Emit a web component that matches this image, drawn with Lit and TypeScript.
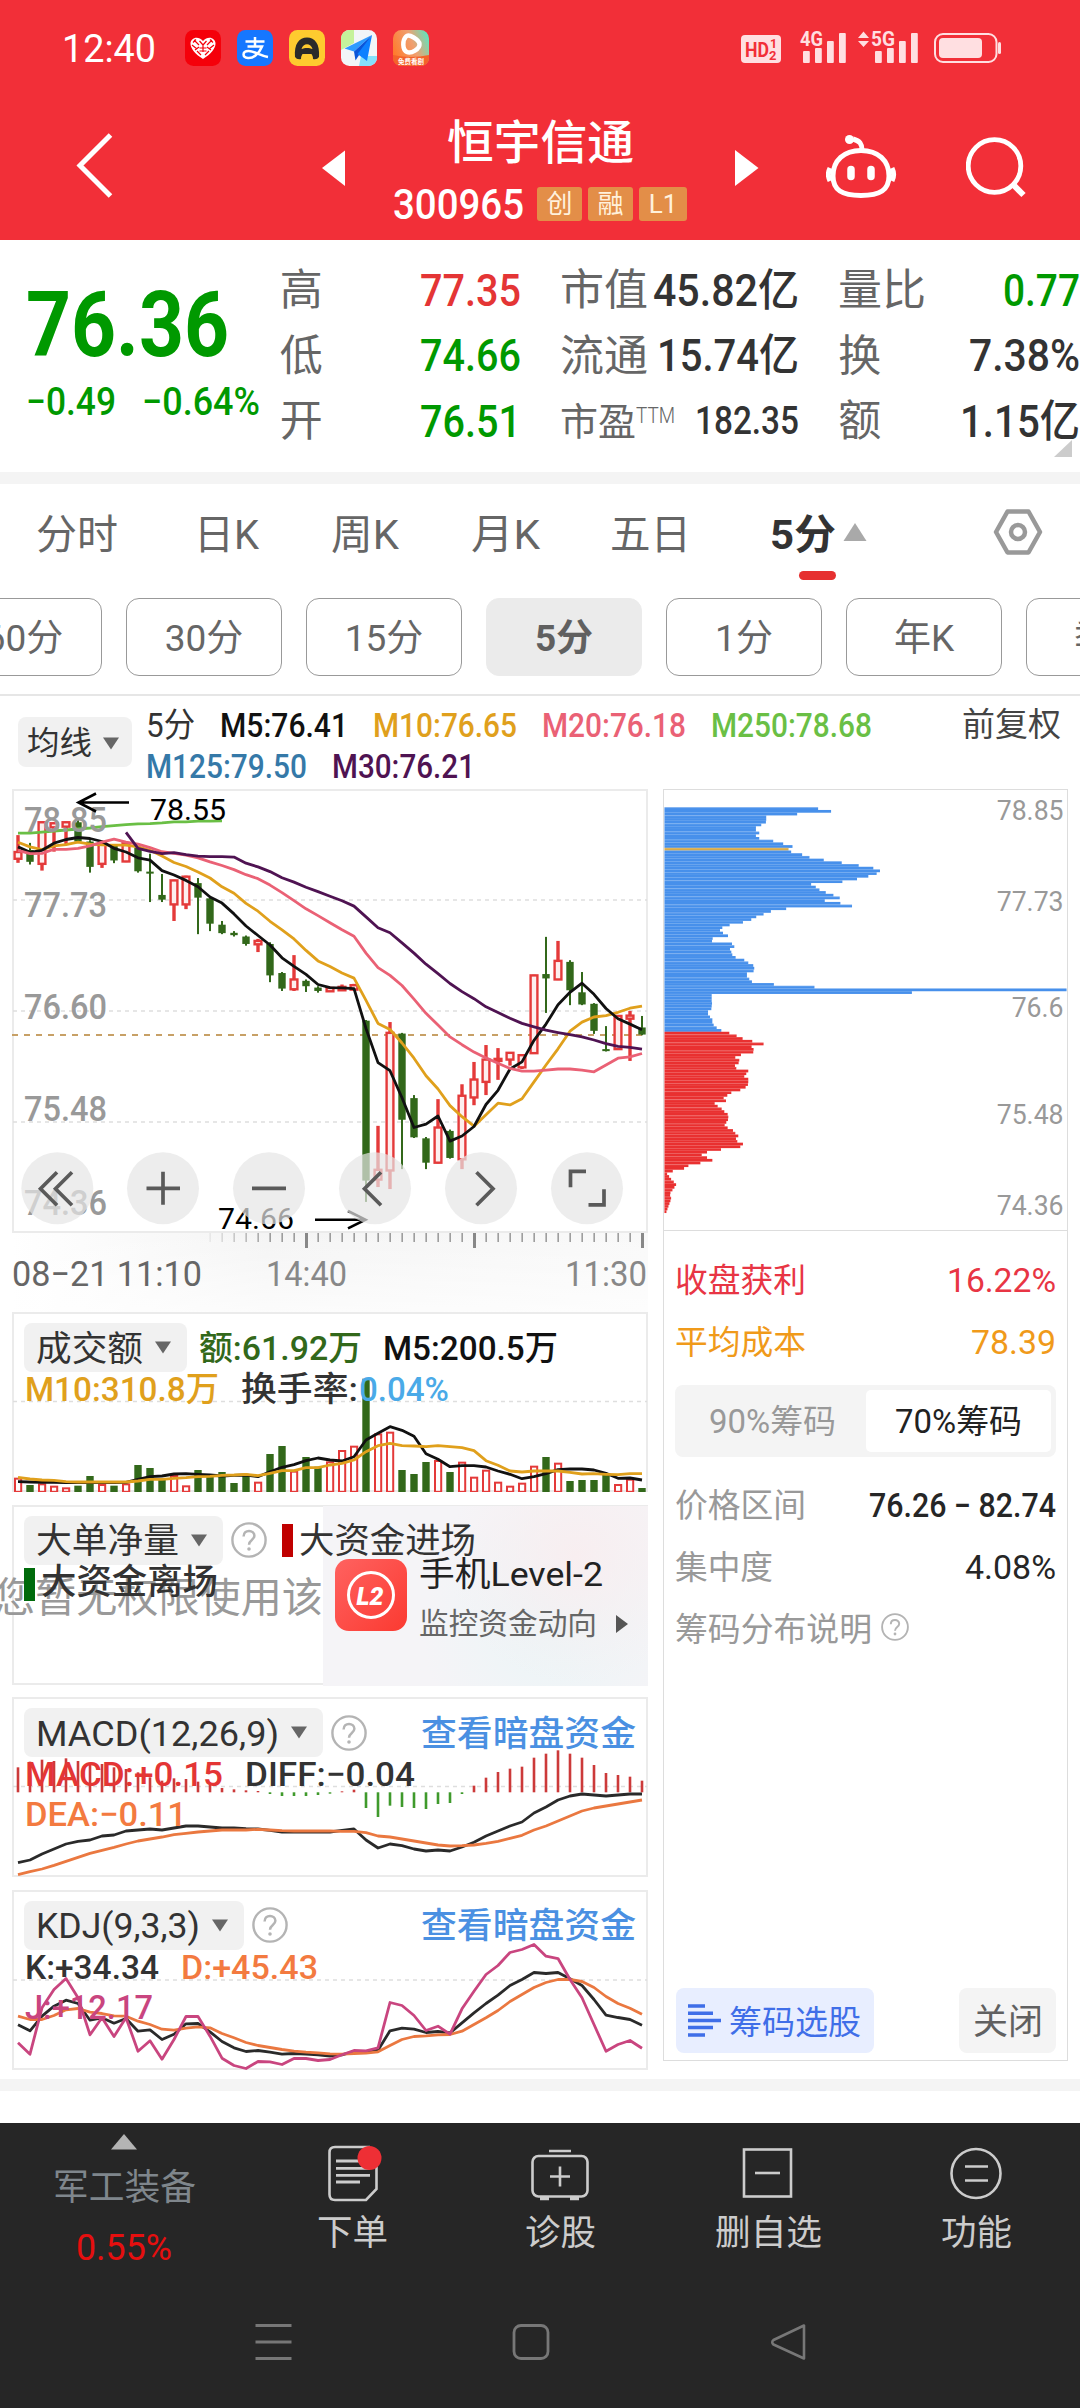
import { LitElement, html, svg, css } from "lit";

/** A single line of text condensed or stretched to a fixed advance width. */
class FitText extends LitElement {
  static properties = { text: { type: String }, w: { type: Number } };
  declare text: string;
  declare w: number;
  static styles = css`
    :host { display: inline-block; flex: none; line-height: 1; white-space: pre; }
    .run { display: block; width: max-content; transform-origin: 0 50%; }
  `;
  constructor() {
    super();
    this.text = "";
    this.w = 0;
  }
  render() {
    return html`<span class="run">${this.text}</span>`;
  }
  updated() {
    const run = this.renderRoot.querySelector(".run") as HTMLElement;
    const natural = run.getBoundingClientRect().width || 1;
    run.style.transform = `scaleX(${this.w / natural})`;
    this.style.width = `${this.w}px`;
  }
}
customElements.define("fit-text", FitText);

const ft = (text: string, w: number, cls = "") =>
  html`<fit-text class=${cls} .text=${text} .w=${w}></fit-text>`;

const st = (x0: number, x1: number, y: number, size: number, fill: string, text: string, weight = 400) =>
  svg`<text x=${x0} y=${y} font-size=${size} fill=${fill} font-weight=${weight} textLength=${x1 - x0} lengthAdjust="spacingAndGlyphs">${text}</text>`;

const RED = "#e43a3a";
const GREEN = "#32681a";
const STEP = 12;
const X0 = 18;
const xAt = (i: number) => X0 + STEP * i;

/** Vertical units per pixel of the price chart and of the indicator charts. */
const PRICE_UNITS = 2.958;
const UNITS = 3;

const line = (values: number[], origin: number, color: string, start = 0, units = UNITS) =>
  svg`<polyline fill="none" stroke=${color} stroke-width="2.8" stroke-linejoin="round"
    points=${values.map((v, k) => `${xAt(k + start)},${(origin + v / units).toFixed(1)}`).join(" ")} />`;

type Candle = [string, number, number, number, number];
const CANDLES: Candle[] = [
  ["r", 163, 213, 233, 245], ["g", 186, 207, 242, 250], ["r", 123, 125, 248, 268], ["r", 125, 128, 140, 212],
  ["r", 123, 125, 138, 190], ["g", 118, 125, 182, 185], ["g", 178, 182, 257, 274], ["r", 185, 187, 248, 260],
  ["g", 190, 195, 238, 246], ["r", 185, 187, 241, 243], ["g", 198, 200, 270, 274], ["g", 218, 271, 277, 361],
  ["g", 278, 340, 354, 361], ["r", 295, 297, 368, 417], ["r", 283, 286, 368, 382], ["g", 290, 305, 348, 456],
  ["g", 345, 350, 425, 447], ["g", 417, 428, 453, 456], ["g", 447, 452, 459, 463], ["g", 460, 463, 485, 490],
  ["r", 470, 476, 486, 509], ["g", 480, 485, 578, 598], ["g", 568, 571, 617, 624], ["r", 518, 590, 619, 624],
  ["g", 590, 594, 610, 627], ["g", 610, 614, 624, 629], ["r", 612, 615, 625, 627], ["r", 605, 612, 622, 624],
  ["r", 603, 607, 620, 622], ["g", 710, 712, 1185, 1248], ["r", 1023, 1153, 1182, 1204], ["r", 716, 748, 1155, 1210],
  ["g", 748, 750, 1005, 1151], ["g", 932, 941, 1057, 1059], ["g", 1056, 1060, 1132, 1151], ["r", 944, 1028, 1132, 1134],
  ["g", 1034, 1038, 1118, 1120], ["r", 900, 934, 1122, 1151], ["r", 834, 886, 939, 962], ["r", 784, 827, 893, 932],
  ["r", 793, 825, 831, 887], ["r", 805, 807, 827, 845], ["r", 812, 814, 850, 855], ["r", 576, 578, 808, 810],
  ["g", 464, 574, 587, 689], ["r", 476, 535, 590, 592], ["g", 533, 538, 622, 666], ["g", 568, 628, 664, 666],
  ["g", 660, 662, 742, 751], ["g", 728, 796, 802, 803], ["r", 696, 698, 796, 798], ["r", 683, 697, 706, 831],
  ["g", 698, 732, 753, 755],
];
const M5 = [198, 214, 208, 187, 176, 170, 173, 182, 202, 213, 230, 237, 268, 281, 297, 316, 346, 364, 396, 432, 460, 488, 526, 551, 575, 605, 614, 615, 617, 735, 836, 860, 940, 1028, 1018, 994, 1068, 1053, 1025, 960, 918, 855, 834, 770, 722, 665, 628, 601, 634, 676, 706, 722, 739];
const M10 = [184, 198, 206, 195, 191, 184, 190, 192, 193, 193, 198, 208, 225, 244, 256, 272, 290, 316, 335, 365, 388, 418, 443, 470, 504, 535, 552, 571, 586, 652, 720, 738, 778, 823, 875, 914, 963, 996, 1024, 990, 956, 961, 943, 893, 843, 795, 743, 716, 701, 697, 687, 675, 669];
const M20 = [208, 218, 217, 205, 205, 202, 195, 184, 175, 184, 190, 200, 212, 217, 222, 230, 242, 253, 265, 280, 292, 311, 333, 357, 381, 401, 422, 443, 462, 512, 555, 578, 608, 648, 690, 725, 760, 783, 805, 822, 838, 853, 861, 861, 858, 855, 855, 858, 863, 843, 823, 819, 809];
const M30 = [155, 202, 211, 218, 215, 221, 225, 227, 227, 228, 246, 257, 271, 289, 302, 317, 330, 344, 357, 373, 405, 437, 452, 482, 512, 545, 573, 602, 626, 647, 671, 688, 705, 720, 730, 740, 747, 753, 760, 769, 780, 788, 791, 796];
const M250 = [157, 157, 154, 151, 148, 145, 142, 138, 135, 132, 130, 129, 127, 124, 124, 122, 122, 121];

const VOLUME = "r533 g555 r550 r557 r562 g557 g528 r552 g557 r550 g495 g504 g535 r525 r556 g510 g528 g516 g549 g525 r545 g462 g438 r512 g471 g500 r484 r450 r437 g236 r400 r395 g510 g522 g486 r480 g516 r485 r530 r509 r545 r557 r548 r497 g471 r488 g543 g540 g540 g525 r552 r536 g564".split(" ");
const V5 = [545, 546, 547, 547, 548, 548, 548, 548, 548, 547, 538, 530, 528, 522, 521, 523, 525, 528, 526, 525, 530, 515, 502, 494, 482, 474, 480, 483, 470, 420, 400, 380, 391, 409, 461, 478, 500, 497, 497, 501, 513, 523, 536, 530, 521, 509, 507, 507, 510, 520, 535, 534, 540];
const V10 = [532, 537, 540, 541, 545, 546, 546, 546, 546, 546, 543, 538, 538, 535, 533, 530, 529, 526, 525, 523, 527, 520, 512, 512, 503, 503, 495, 490, 480, 455, 437, 430, 437, 438, 440, 437, 440, 443, 452, 482, 496, 513, 516, 513, 513, 513, 517, 522, 521, 523, 524, 521, 521];

const HIST = [235, 218, 212, 216, 208, 216, 228, 225, 235, 240, 250, 265, 275, 268, 270, 278, 288, 297, 301, 304, 306, 315, 321, 321, 321, 318, 314, 307, 302, 357, 384, 350, 354, 357, 360, 345, 342, 315, 290, 266, 249, 239, 233, 206, 194, 184, 194, 206, 228, 252, 258, 263, 275];
const DIFF = [521, 513, 495, 480, 465, 457, 453, 441, 438, 426, 423, 420, 423, 417, 411, 411, 414, 417, 417, 419, 420, 424, 429, 429, 429, 429, 429, 424, 420, 453, 477, 465, 470, 480, 486, 483, 486, 474, 460, 441, 426, 411, 399, 372, 354, 333, 321, 315, 318, 321, 318, 315, 315];
const DEA = [557, 548, 540, 529, 517, 505, 493, 484, 475, 465, 456, 450, 444, 437, 433, 429, 426, 423, 423, 423, 421, 423, 425, 426, 426, 426, 426, 427, 427, 431, 441, 444, 450, 456, 462, 468, 471, 470, 468, 463, 457, 448, 439, 423, 411, 396, 381, 366, 357, 351, 345, 339, 333];
const KK = [1006, 1024, 980, 950, 932, 942, 992, 985, 1001, 987, 1025, 1021, 1050, 1034, 1003, 1002, 1027, 1056, 1075, 1086, 1083, 1088, 1094, 1092, 1094, 1096, 1100, 1096, 1086, 1087, 1082, 1024, 1016, 1019, 1029, 1026, 1030, 1000, 970, 942, 917, 888, 870, 849, 852, 849, 868, 888, 930, 977, 984, 990, 1007];
const DD = [980, 990, 990, 978, 961, 957, 968, 972, 979, 980, 995, 1005, 1019, 1022, 1016, 1012, 1015, 1032, 1045, 1059, 1068, 1074, 1080, 1085, 1088, 1090, 1093, 1094, 1092, 1091, 1087, 1068, 1050, 1041, 1039, 1036, 1035, 1025, 1005, 985, 963, 936, 915, 894, 879, 870, 870, 876, 894, 921, 942, 956, 974];
const JJ = [1060, 1094, 955, 900, 867, 925, 1036, 985, 1041, 985, 1085, 1054, 1109, 1050, 981, 981, 1040, 1106, 1128, 1137, 1116, 1117, 1125, 1107, 1107, 1113, 1110, 1096, 1083, 1084, 1075, 939, 948, 978, 1023, 1010, 1034, 958, 905, 855, 828, 789, 780, 765, 800, 807, 870, 925, 1005, 1085, 1065, 1053, 1076];

const CHIPS = [504, 543, 441, 348, 348, 347, 333, 317, 317, 327, 317, 327, 369, 399, 427, 415, 423, 456, 478, 521, 575, 626, 670, 690, 680, 655, 621, 577, 483, 497, 508, 527, 550, 569, 524, 571, 606, 408, 362, 340, 318, 303, 278, 238, 216, 209, 218, 233, 187, 185, 245, 252, 239, 243, 246, 256, 282, 294, 309, 312, 310, 290, 290, 297, 305, 371, 493, 1251, 786, 184, 184, 184, 185, 184, 183, 173, 173, 179, 186, 186, 190, 199, 213, 237, 259, 277, 306, 340, 304, 310, 309, 272, 255, 267, 265, 254, 258, 294, 288, 282, 294, 294, 293, 286, 270, 243, 231, 220, 227, 193, 202, 214, 222, 232, 234, 233, 228, 223, 232, 248, 255, 264, 257, 261, 278, 270, 212, 170, 154, 170, 186, 150, 114, 101, 67, 50, 56, 62, 70, 77, 72, 66, 60, 59, 62, 60, 57, 54, 51, 48];

const candle = ([kind, hi, top, bottom, lo]: Candle, i: number) => {
  const x = xAt(i);
  const y = (v: number) => 780 + v / PRICE_UNITS;
  const h = (v: number, min = 0) => Math.max(min, v / PRICE_UNITS);
  if (kind === "g") {
    return svg`<rect x=${x - 1} y=${y(hi)} width="2" height=${h(lo - hi)} fill=${GREEN} />
      <rect x=${x - 3.7} y=${y(top)} width="7.4" height=${h(bottom - top, 1.6)} fill=${GREEN} />`;
  }
  return svg`<rect x=${x - 1.7} y=${y(hi)} width="3.4" height=${h(top - hi)} fill=${RED} />
    <rect x=${x - 1.7} y=${y(bottom)} width="3.4" height=${h(lo - bottom)} fill=${RED} />
    <rect x=${x - 3.4} y=${y(top)} width="6.8" height=${h(bottom - top, 1)} fill="#fdeeee" stroke=${RED} stroke-width="2.4" />`;
};

const dash = (y: number) =>
  svg`<line x1="13" x2="647" y1=${y} y2=${y} stroke="#dedede" stroke-width="1.4" stroke-dasharray="4 4" />`;
const frame = (y: number, h: number) =>
  svg`<rect x="13" y=${y + 1} width="634" height=${h - 2} fill="none" stroke="#ebebeb" stroke-width="2" />`;

const caret = html`<svg class="caret" viewBox="0 0 18 13"><path d="M1 .5h16L9 12.5z" fill="#666" /></svg>`;
const help = (cls: string) => html`<svg class=${cls} viewBox="0 0 36 36">
  <circle cx="18" cy="18" r="16.6" fill="none" stroke="#b4b4b4" stroke-width="2.4" />
  <path d="M12.6 14.4c0-7.4 10.8-7 10.8-.6 0 4.2-5.4 4.2-5.4 8.9" fill="none" stroke="#b4b4b4" stroke-width="2.5" />
  <circle cx="18" cy="27" r="1.8" fill="#b4b4b4" /></svg>`;

class AppRoot extends LitElement {
  static styles = css`
    :host {
      display: block; width: 1080px; height: 2408px; overflow: hidden; background: #fff; color: #333;
      font-family: Roboto, "Noto Sans CJK SC", sans-serif; line-height: 1;
    }
    * { box-sizing: border-box; }
    svg { display: block; flex: none; }
    svg text { font-family: Roboto, "Noto Sans CJK SC", sans-serif; }
    .row { display: flex; align-items: center; }

    .top { background: #f22f38; color: #fff; height: 240px; }
    .status { height: 96px; padding-left: 62px; }
    .clock { font-size: 38px; margin: 2px 29px 0 0; }
    .apps { gap: 16px; }
    .app { width: 36px; height: 36px; }
    .signals { margin-left: 306px; width: 270px; height: 96px; }
    .bar { display: grid; grid-template-columns: 245px 23px 390px 91px 140px 1fr; padding-left: 77px; height: 144px; }
    .bar svg { height: 144px; }
    .bar .back { margin-left: -10px; }
    .name { display: flex; flex-direction: column; align-items: center; padding-top: 24px; }
    .name .title { font-size: 46.5px; font-weight: 500; height: 50px; }
    .code { margin-top: 14px; height: 40px; gap: 6px; }
    .code .num { font-size: 42px; font-weight: 500; margin: 2px 7px 0 0; }
    .badge { width: 45px; height: 34px; border-radius: 3px; background: #e38e48; color: #fff1dc; font-size: 26px; display: flex; align-items: center; justify-content: center; padding-bottom: 1px; }
    .badge.wide { width: 48px; }

    .quote { display: flex; height: 232px; padding-top: 18px; position: relative; }
    .price { width: 280px; padding-left: 26px; display: flex; flex-direction: column; color: #090; }
    .price .last { font-size: 91px; font-weight: 700; height: 106px; padding-top: 22px; }
    .price .chg { height: 76px; gap: 26px; font-size: 39px; font-weight: 500; }
    .facts { display: flex; flex-direction: column; margin-right: 39px; }
    .facts.a { width: 242px; } .facts.b { width: 239px; } .facts.c { width: 242px; margin-right: 0; }
    .fact { height: 65.5px; display: flex; align-items: center; justify-content: space-between; font-size: 43px; color: #666; }
    .v { font-size: 44px; font-weight: 500; color: #333; }
    .v.sm { font-size: 39px; } .v.up { color: #e43535; } .v.dn { color: #090; }
    .pe { display: flex; align-items: flex-start; font-size: 38px; }
    .pe .ttm { font-size: 22px; font-weight: 300; margin-top: 2px; }
    .corner { position: absolute; left: 1054px; top: 200px; width: 18px; height: 17px; }
    .band { height: 12px; background: #f4f4f4; }

    .tabs { display: grid; grid-template-columns: 158px 137px 140px 139px 160px 73px 151px 1fr; padding: 0 0 12px 36px; height: 114px; align-items: center; font-size: 40.5px; color: #666; position: relative; }
    .tabs svg { height: 98px; align-self: start; }
    .tabs .gear { margin-left: -2px; }
    .on { font-weight: 700; color: #333; }
    .mark { position: absolute; left: 799px; top: 87px; width: 37px; height: 9px; border-radius: 5px; background: #e63030; }
    .periods { display: flex; gap: 24px; margin-left: -54px; width: 1300px; height: 97px; }
    .period { width: 156px; height: 78px; flex: none; border: 1.5px solid #999; border-radius: 13px; display: flex; align-items: center; justify-content: center; font-size: 37px; color: #666; padding-top: 3px; }
    .period.sel { background: #ebebeb; border-color: #ebebeb; font-weight: 700; color: #606060; }
    .clip { overflow: hidden; border-bottom: 2px solid #e6e6e6; height: 98px; }

    .legend { display: flex; height: 93px; padding: 0 19px 0 18px; }
    .chip { display: flex; align-items: center; background: #f1f1f1; border-radius: 8px; height: 49px; font-size: 35px; padding: 0 15px 0 12px; gap: 11px; color: #333; }
    .head .chip fit-text { margin-top: 3px; }
    .chip.ma { width: 114px; height: 50px; margin: 21px 14px 0 0; font-size: 32px; padding: 2px 0 0 9px; gap: 10px; }
    .caret { width: 18px; height: 13px; }
    .lines { padding-top: 8px; flex: 1; }
    .lrow { display: flex; align-items: center; height: 41px; gap: 25px; font-size: 34px; font-weight: 500; }
    .adj { font-size: 33px; margin-top: 12px; color: #444; }
    .n { font-weight: 400; }
    .k { color: #111; } .o { color: #e0a01c; } .p { color: #ea6175; } .g { color: #6abf45; } .b { color: #3579a8; } .u { color: #4f1352; }

    .body { display: flex; height: 1290px; padding-left: 12px; gap: 15px; align-items: flex-start; }
    .charts { width: 636px; display: flex; flex-direction: column; }
    .main { width: 636px; height: 523px; }
    .panel { position: relative; height: 180px; width: 636px; margin-bottom: 12.5px; padding: 11px 0 0 12px; }
    .panel .plot { position: absolute; left: 0; top: 0; width: 636px; height: 180px; }
    .head, .sub { position: relative; display: flex; align-items: center; }
    .head { height: 49px; }
    .sub { height: 40px; font-size: 34px; font-weight: 500; padding-left: 1px; gap: 22px; }
    .head + .sub { margin-top: -3px; }
    .lbl { font-size: 34px; font-weight: 500; }
    .help { width: 36px; height: 36px; margin-left: 8px; }
    .link { color: #4a90e2; font-size: 35px; font-weight: 500; margin: 3px 12px 0 auto; }
    .vg { color: #32681a; margin-left: 12px; } .vk { color: #111; margin-left: 21px; }
    .mr { color: #e43535; } .md { color: #333; } .mo { color: #f37a40; } .mj { color: #c9457f; } .sky { color: #4aaae8; margin-left: -21px; }
    .flag { width: 11px; height: 33px; flex: none; margin-right: 6px; }
    .flag.in { background: #c00000; margin-left: 15px; } .flag.out { background: #006b0b; margin-top: 3px; }
    .fund { font-size: 35px; color: #333; }
    .head .fund { margin-top: 3px; }
    .head + .sub.net { gap: 0; padding-left: 0; margin-top: -2px; }
    .noauth { position: absolute; left: -18px; top: 73px; font-size: 41px; color: #999; }
    .promo { position: absolute; left: 311px; top: 1px; width: 325px; height: 180px; display: flex; padding: 53px 0 0 12px; background: radial-gradient(circle at 78% 28%, #f8eef0 0, rgba(248,238,240,0) 45%), radial-gradient(circle at 70% 68%, #ebf5f7 0, rgba(235,245,247,0) 50%), #f5f4f7; }
    .promo .logo { width: 72px; height: 72px; margin-right: 12px; }
    .ptext { display: flex; flex-direction: column; margin-top: -2px; color: #222; font-size: 34px; gap: 18px; }
    .ptext .psub { color: #666; font-size: 30px; gap: 18px; }

    .side { width: 405px; height: 1272px; border: 1.5px solid #ddd; display: flex; flex-direction: column; }
    .side .dist { width: 403px; height: 441px; border-bottom: 1.5px solid #ddd; margin-bottom: 18px; }
    .kv { display: flex; align-items: center; justify-content: space-between; height: 62px; padding: 0 11px 0 11px; font-size: 33px; color: #999; }
    .kv.red { color: #e83544; } .kv.amber { color: #f09a1a; }
    .kv .dark { color: #262626; } .kv .mid { font-weight: 500; }
    .kv.left { justify-content: flex-start; gap: 9px; }
    .kv .help { width: 28px; height: 28px; margin: -4px 0 0; }
    .seg { display: flex; height: 72px; margin: 12px 11px 17px; padding: 5px; background: #f4f4f4; border-radius: 8px; font-size: 33px; color: #999; }
    .seg div { flex: 1; display: flex; align-items: center; justify-content: center; border-radius: 5px; padding-top: 1px; }
    .seg .cur { background: #fff; color: #222; }
    .foot { margin: auto 11px 7px 12px; display: flex; justify-content: space-between; height: 65px; font-size: 33px; }
    .foot fit-text { margin-top: 3px; }
    .pick { width: 198px; border-radius: 8px; background: #e8eeff; color: #3f6ee8; display: flex; align-items: center; padding-left: 12px; gap: 8px; }
    .close { width: 97px; border-radius: 8px; background: #f4f4f4; color: #606060; display: flex; align-items: center; justify-content: center; font-size: 35px; }

    .gap { height: 32px; }
    .dock { height: 285px; background: #262626; color: #ccc; }
    .items { display: grid; grid-template-columns: 248px repeat(4, 208px); height: 157px; }
    .item { display: flex; flex-direction: column; align-items: center; font-size: 35.5px; }
    .item .ico { width: 80px; height: 80px; }
    .item .t { height: 58px; padding-top: 13px; }
    .sector { display: flex; flex-direction: column; align-items: center; color: #7f868c; font-size: 36px; }
    .sector .up { width: 80px; height: 37px; }
    .sector .t { height: 54px; padding-top: 10px; }
    .sector .pct { height: 66px; padding-top: 16px; color: #e60f0f; }
    .nav { display: grid; grid-template-columns: repeat(3, 257px); padding-left: 145px; }
    .nav svg { width: 257px; height: 128px; }
  `;

  top() {
    return html`<div class="top">
      <div class="status row">
        ${ft("12:40", 94, "clock")}
        <div class="apps row">
          <svg class="app" viewBox="0 0 36 36"><rect width="36" height="36" rx="8.5" fill="#f5000a" />
            <path d="M18 29C10 24 5.5 18.5 5.5 13.500S12.500 5 18 11c5.500-6 12.500-2.500 12.500 2.500S26 24 18 29z" fill="#fff" />
            <path d="M9 10l5 5m-7 0l5 4M27 10l-5 5m7 0l-5 4M14.500 11l3.500 4 3.500-4M18 15v7m-3.500-4h7m-7 3h7M12 21l4 4m8-4l-4 4M8 12.500l3-3M28 12.500l-3-3M10 20l4-3M26 20l-4-3" stroke="#f5000a" stroke-width="1.2" fill="none" /></svg>
          <svg class="app" viewBox="0 0 36 36"><rect width="36" height="36" rx="8.5" fill="#1677ff" />
            <path d="M8.500 11.500h19M18 7v9M10.500 16.500h14.500C22 24 16 28.500 11 28 5 27.500 5 21 11.500 21c6 0 11 4.500 19.500 6" stroke="#fff" stroke-width="2.5" fill="none" /></svg>
          <svg class="app" viewBox="0 0 36 36"><rect width="36" height="36" rx="8.5" fill="#fecb2f" />
            <path d="M6 27C5 14 10 7.500 18 7.500S31 14 30 27q-2 3-6 2c0-2-.500-3.500-1.500-5h-9c-1 1.500-1.500 3-1.500 5q-4 1-6-2z" fill="#2a2a2a" />
            <path d="M12.500 19c1.500-6.500 9.500-6.500 11 0-3-1.500-8-1.500-11 0z" fill="#fecb2f" /></svg>
          <svg class="app" viewBox="0 0 36 36"><rect width="36" height="36" rx="8.5" fill="#f2f5f8" />
            <path d="M8.500 0H13v13L0 20V8.500C0 4 4 0 8.500 0z" fill="#c5f29b" /><path d="M20 26h16v1.500c0 4.500-4 8.500-8.500 8.500H18z" fill="#86e0fb" />
            <path d="M31 5L3.500 18.500l9.500 3z" fill="#2e9bff" /><path d="M31 5L13 21.500l1.500 9z" fill="#0b55d8" /><path d="M31 5L16.500 24 26 31z" fill="#0d80ff" /></svg>
          <svg class="app" viewBox="0 0 36 36"><defs><linearGradient id="vg" x1="0" y1=".6" x2="1" y2=".2"><stop offset="0" stop-color="#ff7a2c" /><stop offset=".55" stop-color="#f0a070" /><stop offset="1" stop-color="#63e3bd" /></linearGradient></defs>
            <rect width="36" height="36" rx="8.5" fill="url(#vg)" /><path d="M0 25q18 4 36 0v3c0 4-3 8-8 8H8c-5 0-8-4-8-8z" fill="#f4622a" />
            <path d="M13 6.500c3-3 13 3 13.500 7.500.5 5-8.500 10-12.500 8-5-2.500-4.500-12-1-15.500z" fill="none" stroke="#fff" stroke-width="4.5" />
            <text x="5" y="33.5" font-size="6.5" font-weight="700" fill="#fff" textLength="26">免费看剧</text></svg>
        </div>
        <svg class="signals" viewBox="735 0 270 96" fill="#ffdfe1">
          <rect x="741" y="35" width="40" height="28" rx="4" />
          <text x="745" y="57" font-size="21" font-weight="700" fill="#f22f38" textLength="24" lengthAdjust="spacingAndGlyphs">HD</text>
          <text x="770" y="48" font-size="12.5" font-weight="700" fill="#f22f38">1</text><text x="769" y="60" font-size="13" font-weight="700" fill="#f22f38">2</text>
          ${st(800, 823, 46, 21, "#ffdfe1", "4G", 700)}${st(871, 895, 46, 21, "#ffdfe1", "5G", 700)}
          ${[803, 875].map((x) => [51, 48, 41, 33].map((y, k) => svg`<rect x=${x + 12 * k} y=${y} width="6.8" height=${63 - y} rx="1" />`))}
          <path d="M858 38l5.500-6.500L869 38zM858 41l5.500 6 5.500-6z" />
          <rect x="935" y="34" width="61.5" height="28" rx="8" fill="none" stroke="#ffdfe1" stroke-width="2" />
          <rect x="939" y="38" width="43" height="20" rx="4" /><rect x="998" y="42" width="3" height="12" rx="1.5" />
        </svg>
      </div>
      <div class="bar">
        <svg class="back" width="60" viewBox="67 96 60 144"><path d="M110.500 135L80 165.500 110.500 196" fill="none" stroke="#fff" stroke-width="5" /></svg>
        <svg width="23" viewBox="322 96 23 144"><path d="M345 150.500v35.500L322 168z" fill="#fff" /></svg>
        <div class="name">
          ${ft("恒宇信通", 187, "title")}
          <div class="code row">${ft("300965", 131, "num")}
            <span class="badge">创</span><span class="badge">融</span><span class="badge wide">L1</span></div>
        </div>
        <svg width="24" viewBox="735 96 24 144"><path d="M735 150v36l23.500-18z" fill="#fff" /></svg>
        <svg width="80" viewBox="826 96 80 144"><g transform="translate(-4 0)" fill="none" stroke="#fff" stroke-width="5">
          <path d="M865 150.500c-17 0-28 10-28 25.500 0 14 9 19.500 28 19.500s28-5.500 28-19.500C893 160.500 882 150.500 865 150.500z" />
          <path d="M866 150c0-6-2-9-9-11" /><circle cx="853.5" cy="139.5" r="4.5" fill="#fff" stroke="none" />
          <path d="M834 168c-2 4-2 9 0 13M896 168c2 4 2 9 0 13" stroke-width="5" />
          <path d="M855 169.500v7M875 169.500v7" stroke-width="7.5" stroke-linecap="round" /></g></svg>
        <svg width="62" viewBox="966 96 62 144"><g fill="none" stroke="#fff" stroke-width="4.8"><circle cx="994.5" cy="166" r="26.3" /><path d="M1013 184.500l10.500 10.500" stroke-width="6" /></g></svg>
      </div>
    </div>`;
  }

  quote() {
    return html`<div class="quote">
      <div class="price">${ft("76.36", 203, "last")}<div class="chg row">${ft("−0.49", 90)}${ft("−0.64%", 118)}</div></div>
      <div class="facts a">
        <div class="fact">${ft("高", 43)}${ft("77.35", 101, "v up")}</div>
        <div class="fact">${ft("低", 43)}${ft("74.66", 101, "v dn")}</div>
        <div class="fact">${ft("开", 43)}${ft("76.51", 101, "v dn")}</div>
      </div>
      <div class="facts b">
        <div class="fact">${ft("市值", 88)}${ft("45.82亿", 146, "v")}</div>
        <div class="fact">${ft("流通", 88)}${ft("15.74亿", 142, "v")}</div>
        <div class="fact"><span class="pe">${ft("市盈", 76)}${ft("TTM", 39, "ttm")}</span>${ft("182.35", 104, "v sm")}</div>
      </div>
      <div class="facts c">
        <div class="fact">${ft("量比", 88)}${ft("0.77", 77, "v dn")}</div>
        <div class="fact">${ft("换", 43)}${ft("7.38%", 111, "v")}</div>
        <div class="fact">${ft("额", 43)}${ft("1.15亿", 120, "v")}</div>
      </div>
      <svg class="corner" viewBox="0 0 18 17"><path d="M18 0v17H0z" fill="#ccc" /></svg>
    </div>
    <div class="band"></div>`;
  }

  tabs() {
    return html`<div class="tabs">
      ${ft("分时", 82)}${ft("日K", 65)}${ft("周K", 68)}${ft("月K", 69)}${ft("五日", 81)}${ft("5分", 66, "on")}
      <svg width="24" viewBox="845 484 24 98"><path d="M857 523l11.500 18h-23z" fill="#a9a9a9" /></svg>
      <svg class="gear" width="52" viewBox="994 484 52 98"><g fill="none" stroke="#999" stroke-width="4.5" stroke-linejoin="round"><path d="M1009.500 511.500h21L1042 532l-11.500 20.500h-21L998 532z" /><circle cx="1020" cy="532" r="7" /></g></svg>
      <div class="mark"></div>
    </div>
    <div class="clip"><div class="periods">
      ${["60分", "30分", "15分", "5分", "1分", "年K", "季K"].map(
        (p) => html`<div class="period ${p === "5分" ? "sel" : ""}">${p}</div>`)}
    </div></div>
    <div class="legend">
      <div class="chip ma">${ft("均线", 65)}${caret}</div>
      <div class="lines">
        <div class="lrow">${ft("5分", 49, "n")}${ft("M5:76.41", 128, "k")}${ft("M10:76.65", 144, "o")}${ft("M20:76.18", 144, "p")}${ft("M250:78.68", 161, "g")}</div>
        <div class="lrow">${ft("M125:79.50", 161, "b")}${ft("M30:76.21", 143, "u")}</div>
      </div>
      ${ft("前复权", 99, "adj")}
    </div>`;
  }

  mainChart() {
    const grey = "#999";
    const ticks = Array.from({ length: 37 }, (_, k) => 16 + k);
    const price = (v: number[], color: string, start = 0) => line(v, 780, color, start, PRICE_UNITS);
    return html`<svg class="main" viewBox="12 789 636 523">
      <defs><linearGradient id="ax" x1="0" x2="1" y1="0" y2="0"><stop offset="0" stop-color="#fff" /><stop offset=".4" stop-color="#f4f4f4" /><stop offset="1" stop-color="#f9f9f9" /></linearGradient>
      <linearGradient id="fade" x1="0" x2="0" y1="0" y2="1"><stop offset="0" stop-color="#fff" stop-opacity="0" /><stop offset="1" stop-color="#fff" stop-opacity=".7" /></linearGradient></defs>
      <rect x="12" y="1232" width="636" height="80" fill="url(#ax)" /><rect x="12" y="1232" width="636" height="80" fill="url(#fade)" />
      ${frame(789, 444)}${[900, 1011, 1122].map(dash)}
      <line x1="12" x2="648" y1="1035" y2="1035" stroke="#c7a066" stroke-width="1.8" stroke-dasharray="6 6" />
      ${CANDLES.map(candle)}
      ${price(M250, "#6abf45")}${price(M10, "#e0a01c")}${price(M5, "#111")}${price(M20, "#ea6175")}${price(M30, "#4f1352", 9)}
      ${st(24, 107, 832, 35, grey, "78.85", 500)}${st(24, 107, 917, 35, grey, "77.73", 500)}${st(24, 107, 1019, 35, grey, "76.60", 500)}
      ${st(24, 107, 1121, 35, grey, "75.48", 500)}${st(24, 107, 1215, 35, grey, "74.36", 500)}
      ${st(150, 226, 820, 29.5, "#000", "78.55")}${st(218, 294, 1229, 29.5, "#000", "74.66")}
      <path d="M129 802.500H79M96 793.500l-17.500 9 17.500 9M315 1219.700h49M348 1211l17.500 8.700-17.500 8.700" fill="none" stroke="#000" stroke-width="2.6" />
      ${[57.3, 163, 269, 375, 481, 587].map((x) => svg`<circle cx=${x} cy="1188.3" r="36" fill="#e5e5e5" fill-opacity=".7" />`)}
      <path transform="translate(0 5.8)" d="M57 1166.500l-16.500 16.500L57 1199.500M72 1166.500l-16.500 16.500 16.500 16.500M146.500 1182.500H180M163 1166v33M252 1182.500h34M381 1166.500l-16.500 16.500 16.500 16.500M476.500 1166.500l16.500 16.500-16.500 16.500M570.500 1181.500v-16h15.500M604 1183.500V1199h-15.500" fill="none" stroke="#5a5a5a" stroke-width="3.7" />
      ${ticks.map((i) => {
        const major = i === 24 || i === 38 || i === 52;
        return svg`<rect x=${xAt(i) - (major ? 1 : 0.5)} y="1233" width=${major ? 3 : 1.3} height=${major ? 15 : 9} fill="#888" opacity=${Math.min(1, (i - 15) / 6)} />`;
      })}
      ${st(12, 202, 1286, 35, "#666", "08−21 11:10", 400)}${st(266, 347, 1286, 35, "#888", "14:40", 400)}${st(565, 647, 1286, 35, "#888", "11:30", 400)}
    </svg>`;
  }

  volume() {
    return html`<div class="panel">
      <svg class="plot" viewBox="12 1312 636 180">${frame(1312, 180)}${dash(1401.5)}
        ${VOLUME.map((v, i) => {
          const y = 1300 + Number(v.slice(1)) / 3;
          return v[0] === "g"
            ? svg`<rect x=${xAt(i) - 3.7} y=${y} width="7.4" height=${1492 - y} fill=${GREEN} />`
            : svg`<rect x=${xAt(i) - 3} y=${y + 1} width="6.2" height=${1490.8 - y} fill="#fff" stroke=${RED} stroke-width="2" />`;
        })}
        ${line(V5, 1300, "#111")}${line(V10, 1300, "#e0a01c")}
      </svg>
      <div class="head"><div class="chip">${ft("成交额", 107)}${caret}</div>${ft("额:61.92万", 163, "lbl vg")}${ft("M5:200.5万", 175, "lbl vk")}</div>
      <div class="sub">${ft("M10:310.8万", 194, "o")}${ft("换手率:", 117, "md")}${ft("0.04%", 90, "sky")}</div>
    </div>`;
  }

  netOrders() {
    return html`<div class="panel">
      <svg class="plot" viewBox="12 1505 636 180">${frame(1505, 180)}</svg>
      ${ft("您暂无权限使用该", 329, "noauth")}
      <div class="promo">
        <svg class="logo" viewBox="0 0 72 72"><defs><linearGradient id="lg" x1="0" x2="1" y1="0" y2="1"><stop offset="0" stop-color="#ff6260" /><stop offset="1" stop-color="#fb3a31" /></linearGradient></defs>
          <rect width="72" height="72" rx="14" fill="url(#lg)" /><circle cx="36" cy="36" r="22.5" fill="none" stroke="#fff" stroke-width="3" />
          <text x="21.5" y="45.5" font-size="26" font-weight="900" font-style="italic" fill="#fff" textLength="27" lengthAdjust="spacingAndGlyphs">L2</text></svg>
        <div class="ptext">${ft("手机Level-2", 184)}
          <div class="psub row">${ft("监控资金动向", 178)}<svg width="13" height="18" viewBox="0 0 13 18"><path d="M1 0l12 9L1 18z" fill="#555" /></svg></div></div>
      </div>
      <div class="head"><div class="chip">${ft("大单净量", 143)}${caret}</div>${help("help")}<i class="flag in"></i>${ft("大资金进场", 177, "fund")}</div>
      <div class="sub net"><i class="flag out"></i>${ft("大资金离场", 177, "fund")}</div>
    </div>`;
  }

  macd() {
    return html`<div class="panel">
      <svg class="plot" viewBox="12 1698 636 180">${frame(1698, 180)}${dash(1787.5)}
        ${HIST.map((v, i) => {
          const y = 1690 + v / 3;
          const z = 1793.3;
          return svg`<rect x=${xAt(i) - 1.3} y=${Math.min(y, z)} width="2.6" height=${Math.abs(z - y)} fill=${v < 310 ? "#cc3a3a" : "#3f9a2c"} />`;
        })}
        ${line(DIFF, 1690, "#2a2a2a")}${line(DEA, 1690, "#ea7840")}
      </svg>
      <div class="head"><div class="chip">${ft("MACD(12,26,9)", 243)}${caret}</div>${help("help")}${ft("查看暗盘资金", 215, "link")}</div>
      <div class="sub">${ft("MACD:+0.15", 198, "mr")}${ft("DIFF:−0.04", 170, "md")}</div>
      <div class="sub">${ft("DEA:−0.11", 162, "mo")}</div>
    </div>`;
  }

  kdj() {
    return html`<div class="panel">
      <svg class="plot" viewBox="12 1890.5 636 180">${frame(1890.5, 180)}${dash(1980.5)}
        ${line(KK, 1690, "#2a2a2a")}${line(DD, 1690, "#ea7840")}${line(JJ, 1690, "#c9457f")}
      </svg>
      <div class="head"><div class="chip">${ft("KDJ(9,3,3)", 164)}${caret}</div>${help("help")}${ft("查看暗盘资金", 215, "link")}</div>
      <div class="sub">${ft("K:+34.34", 134, "md")}${ft("D:+45.43", 137, "mo")}</div>
      <div class="sub">${ft("J:+12.17", 128, "mj")}</div>
    </div>`;
  }

  side() {
    const h = 2.711;
    const grey = "#999";
    return html`<div class="side">
      <svg class="dist" viewBox="664 790 403 441">
        ${CHIPS.map((c, i) => svg`<rect x="664" y=${807.3 + i * h} width=${(c - 42) / 3} height=${h + 0.05} fill=${i === 15 ? "#d8ab4a" : i < 83 ? "#4790eb" : "#e93030"} />
          ${i % 3 === 0 ? svg`<rect x="664" y=${807.3 + i * h} width=${(c - 42) / 3} height=".9" fill="#fff" opacity=".16" />` : ""}`)}
        ${st(997, 1064, 820, 27, grey, "78.85")}${st(997, 1064, 911, 27, grey, "77.73")}${st(1012, 1064, 1018, 27, grey, "76.6")}${st(997, 1064, 1125, 27, grey, "75.48")}${st(997, 1064, 1216, 27, grey, "74.36")}
      </svg>
      <div class="kv red">${ft("收盘获利", 131)}${ft("16.22%", 109)}</div>
      <div class="kv amber">${ft("平均成本", 131)}${ft("78.39", 85)}</div>
      <div class="seg"><div>${ft("90%筹码", 127)}</div><div class="cur">${ft("70%筹码", 127)}</div></div>
      <div class="kv">${ft("价格区间", 131)}${ft("76.26 − 82.74", 187, "dark mid")}</div>
      <div class="kv">${ft("集中度", 98)}${ft("4.08%", 91, "dark")}</div>
      <div class="kv left">${ft("筹码分布说明", 197)}${help("help")}</div>
      <div class="foot">
        <div class="pick"><svg width="33" height="33" viewBox="0 0 33 33"><path d="M0 2h17M0 9.300h25M0 16.500h33M0 23.500h25M0 31h17" stroke="#3f6ee8" stroke-width="3.6" /></svg>${ft("筹码选股", 132)}</div>
        <div class="close">${ft("关闭", 70)}</div>
      </div>
    </div>`;
  }

  dock() {
    const item = (label: string, w: number, icon: unknown) =>
      html`<div class="item"><svg class="ico" viewBox="-40 0 80 80" fill="none" stroke="#ccc" stroke-width="2.6">${icon}</svg>${ft(label, w, "t")}</div>`;
    return html`<div class="dock">
      <div class="items">
        <div class="sector"><svg class="up" viewBox="-40 0 80 37"><path d="M0 11l13 15.500h-26z" fill="#b4b4b4" /></svg>${ft("军工装备", 143, "t")}${ft("0.55%", 96, "pct")}</div>
        ${item("下单", 71, svg`<path d="M18 24H-17q-5.500 0-5.500 5.500v42q0 5.500 5.500 5.500H14L24.500 66V35" /><path d="M-16 38h26M-16 45.300h34M-16 52.300h34M-16 59h24" stroke-width="2.8" /><circle cx="17.5" cy="35" r="12" fill="#ee2f35" stroke="none" />`)}
        ${item("诊股", 71, svg`<rect x="-27.5" y="33" width="55" height="40.5" rx="6" /><path d="M-11 28H11M0 43.500v20M-10 53.500h20" /><path d="M-20 75.500h9M10 75.500h9" stroke-width="3.5" />`)}
        ${item("删自选", 107, svg`<rect x="-24" y="26.5" width="47" height="47" /><path d="M-13 50h25" />`)}
        ${item("功能", 71, svg`<circle cx="0" cy="50.5" r="24.5" /><path d="M-11 43.500H12M-11 57.500H12" />`)}
      </div>
      <div class="nav">
        <svg viewBox="-128.5 0 257 128"><path d="M-18 45.500h36M-18 62h36M-18 78.500h36" stroke="#777" stroke-width="2.8" /></svg>
        <svg viewBox="-128.5 0 257 128"><rect x="-16.5" y="45.5" width="34" height="33" rx="7" fill="none" stroke="#777" stroke-width="2.8" /></svg>
        <svg viewBox="-128.5 0 257 128"><path d="M16.500 45.500v33L-14 64.500q-2.500-2.500 0-4.500z" fill="none" stroke="#777" stroke-width="2.6" stroke-linejoin="round" /></svg>
      </div>
    </div>`;
  }

  render() {
    return html`${this.top()}${this.quote()}${this.tabs()}
      <div class="body">
        <div class="charts">${this.mainChart()}${this.volume()}${this.netOrders()}${this.macd()}${this.kdj()}</div>
        ${this.side()}
      </div>
      <div class="band"></div>
      <div class="gap"></div>
      ${this.dock()}`;
  }
}
customElements.define("app-root", AppRoot);
